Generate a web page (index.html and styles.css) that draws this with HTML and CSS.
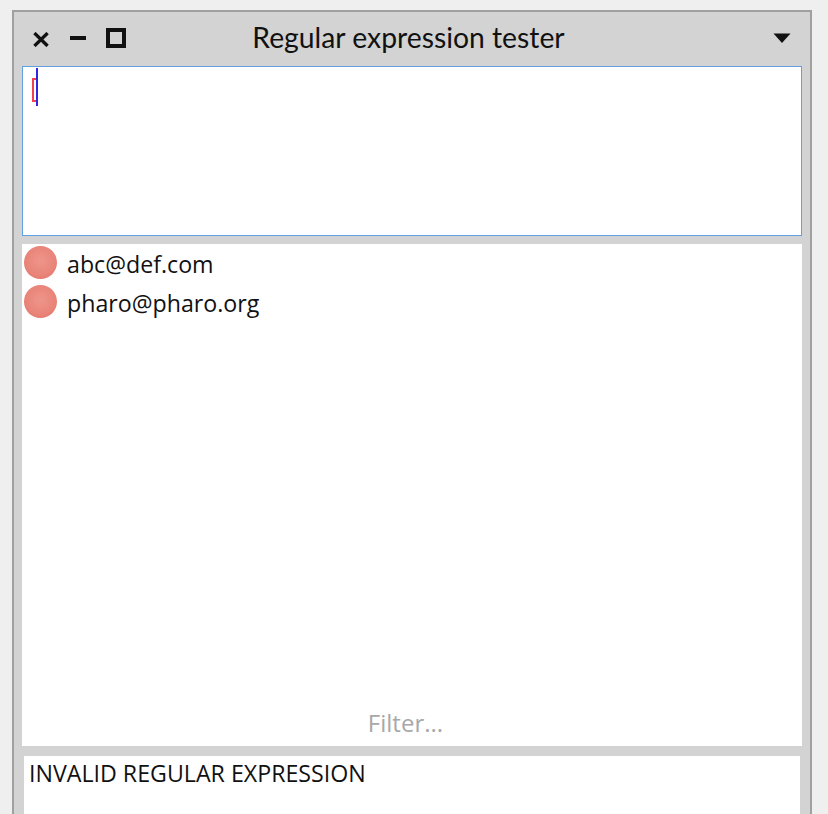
FILE: index.html
```html
<!DOCTYPE html>
<html>
<head>
<meta charset="utf-8">
<link rel="stylesheet" href="styles.css">
</head>
<body>
<div class="window">
  <div class="titlebar">
    <div class="controls">
      <svg class="ic-close" width="16" height="15" viewBox="0 0 16 15"><path d="M2.6 2.2 L13.4 12.8 M13.4 2.2 L2.6 12.8" stroke="#111" stroke-width="3.3" stroke-linecap="square"/></svg>
      <span class="ic-min"></span>
      <span class="ic-max"></span>
    </div>
    <div class="title">Regular expression tester</div>
    <svg class="ic-menu" width="18" height="10" viewBox="0 0 18 10"><path d="M0.5 0.5 H17.5 L9 10 Z" fill="#111"/></svg>
  </div>
  <div class="input"><span class="caret"><span class="sel"></span><span class="bar"></span></span></div>
  <div class="list">
    <div class="rows">
      <div class="row"><span class="dot"></span><span class="label">abc@def.com</span></div>
      <div class="row"><span class="dot"></span><span class="label">pharo@pharo.org</span></div>
    </div>
    <div class="filter">Filter...</div>
  </div>
  <div class="result">INVALID REGULAR EXPRESSION</div>
</div>
</body>
</html>
```
FILE: styles.css
```css
html, body { margin: 0; padding: 0; }
body { background: #efefef; font-family: "Open Sans", "DejaVu Sans", sans-serif; color: #111; overflow: hidden; }
.window { box-sizing: border-box; width: 800px; height: 830px; margin: 10px 0 0 12px; border: 2px solid #a0a0a0; background: #d3d3d3; display: flex; flex-direction: column; }
.titlebar { height: 54px; display: flex; align-items: center; }
.controls { display: flex; align-items: center; padding-left: 19px; width: 121px; }
.ic-close { display: block; margin-top: 1px; }
.ic-min { display: block; width: 16px; height: 4px; background: #111; margin-left: 21px; margin-bottom: 2px; }
.ic-max { display: block; box-sizing: border-box; width: 20px; height: 20px; border: 4px solid #111; margin-left: 20px; margin-bottom: 2px; }
.title { flex: 1; text-align: center; font-family: "Lato", "Open Sans", sans-serif; font-size: 28.3px; line-height: 34px; margin-right: 110px; margin-bottom: 4px; }
.ic-menu { display: block; margin-right: 19px; margin-bottom: 2px; }
.input { box-sizing: border-box; height: 170px; margin: 0 8px; border: 1px solid #64a0e1; background: #fff; position: relative; }
.caret { position: absolute; left: 9px; top: 1px; width: 6px; height: 38px; }
.sel { position: absolute; left: 0; top: 10px; width: 4px; height: 24px; box-sizing: border-box; border: 2px solid #f2404e; border-right: none; }
.bar { position: absolute; left: 4px; top: 0; width: 2px; height: 38px; background: #3028e0; }
.list { height: 502px; margin: 8px 8px 0; background: #fff; display: flex; flex-direction: column; }
.rows { flex: 1; }
.row { height: 39px; display: flex; align-items: center; padding-left: 2px; }
.dot { width: 33px; height: 33px; margin-bottom: 2px; border-radius: 50%; background: radial-gradient(circle at 50% 45%, #ee958a 0%, #e98479 60%, #dd6b5e 100%); }
.label { font-size: 23.2px; margin-left: 10px; }
.filter { text-align: center; color: #a8a8a8; font-size: 24px; padding: 0 13px 7px 0; }
.result { flex: 1; margin: 10px 10px 0; background: #fff; padding: 1px 5px; font-size: 23.2px; }
```
